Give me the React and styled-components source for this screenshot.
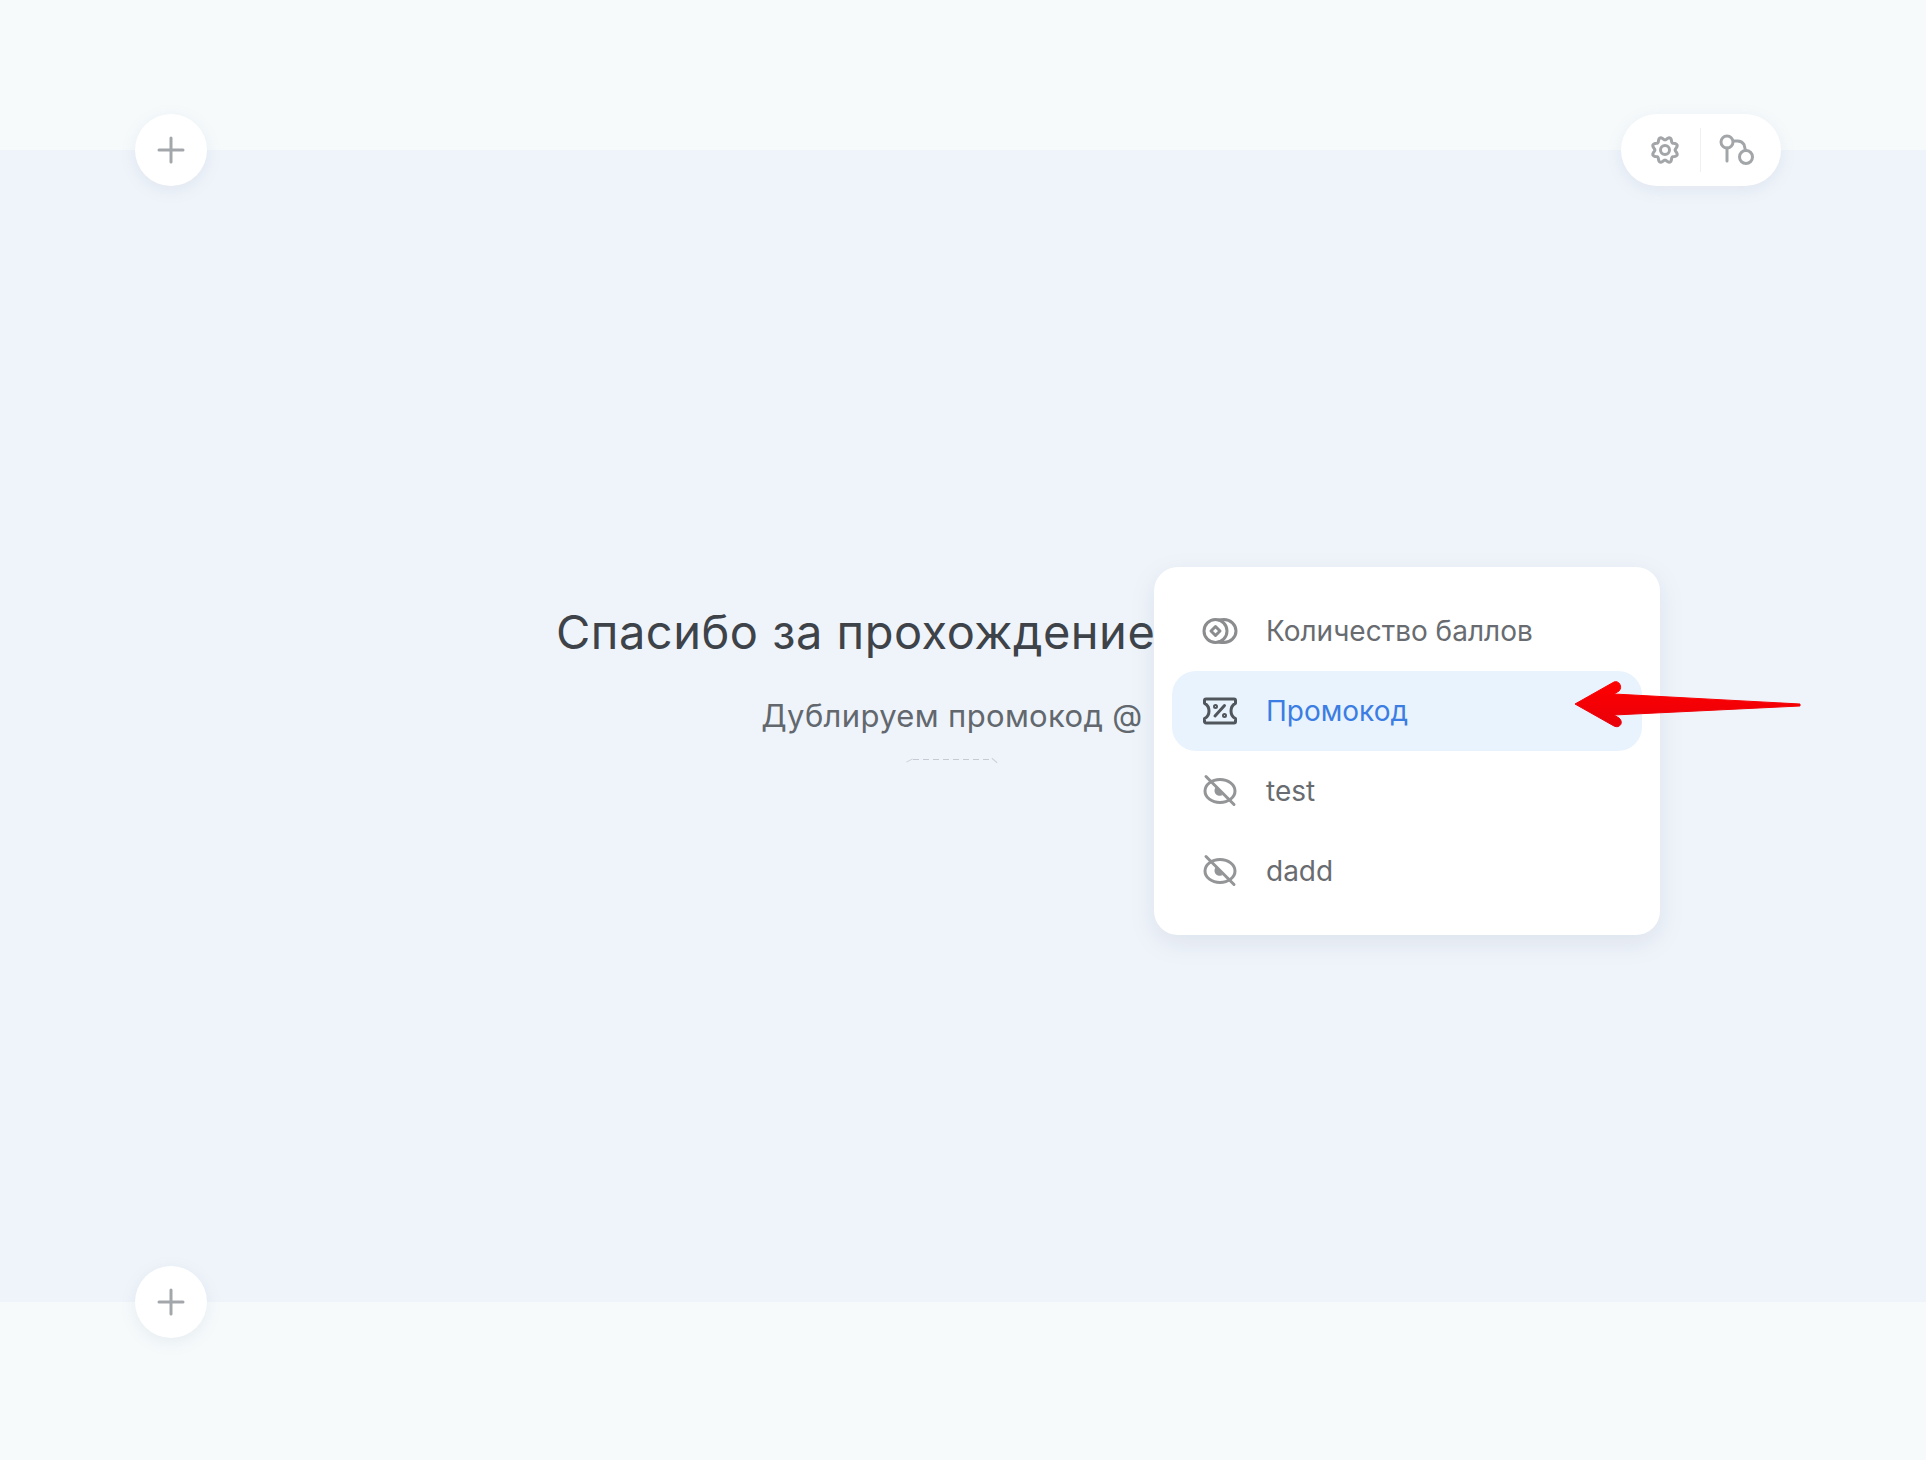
import styled, { createGlobalStyle } from "styled-components";

const GlobalStyle = createGlobalStyle`
  html, body {
    margin: 0;
    padding: 0;
    background: #f6fafb;
    font-family: "Inter", "Noto Sans", sans-serif;
  }
`;

const Page = styled.div`
  width: 1926px;
  height: 1460px;
  display: flex;
  flex-direction: column;
  overflow: hidden;
  position: relative;
`;

const Band = styled.div`
  height: ${(p) => p.$height}px;
  background: #f6fafb;
  flex-shrink: 0;
`;

const Canvas = styled.main`
  position: relative;
  flex: 1;
  background: #eff4fa;
  padding: 457px 0 0 556px;
  box-sizing: border-box;
`;

const Content = styled.section`
  width: 792px;
  display: flex;
  flex-direction: column;
`;

const Title = styled.h1`
  margin: 0;
  font-size: 47px;
  line-height: 50px;
  letter-spacing: 0.5px;
  font-weight: 400;
  color: #3d4349;
  white-space: nowrap;
`;

const Subtitle = styled.p`
  margin: 39px 0 0;
  font-size: 31px;
  line-height: 40px;
  letter-spacing: 0.35px;
  font-weight: 400;
  color: #62686e;
  text-align: center;
  white-space: nowrap;
`;

const DashedEdge = styled.div`
  position: relative;
  width: 78px;
  height: 1px;
  margin: 23px auto 0;
  background: repeating-linear-gradient(90deg, #c5cad3 0 6px, transparent 6px 10px);

  &::before,
  &::after {
    content: "";
    position: absolute;
    top: 1px;
    width: 7px;
    height: 1px;
    background: #cdd2da;
  }

  &::before {
    left: -7px;
    transform: rotate(-28deg);
  }

  &::after {
    right: -7px;
    transform: rotate(40deg);
  }
`;

const RoundButton = styled.button`
  position: absolute;
  left: 135px;
  ${(p) => (p.$bottom ? "bottom: -36px;" : "top: -36px;")}
  width: 72px;
  height: 72px;
  padding: 0;
  border: 0;
  border-radius: 50%;
  background: #fff;
  box-shadow: 0 4px 16px rgba(120, 140, 170, 0.12);
  display: flex;
  align-items: center;
  justify-content: center;
`;

const ToolPill = styled.div`
  position: absolute;
  right: 145px;
  top: -36px;
  width: 160px;
  height: 72px;
  box-sizing: border-box;
  padding-left: 26px;
  border-radius: 36px;
  background: #fff;
  box-shadow: 0 4px 16px rgba(120, 140, 170, 0.12);
  display: flex;
  align-items: center;
  gap: 17px;
`;

const ToolDivider = styled.div`
  width: 1px;
  height: 44px;
  background: #eef0f3;
`;

const Menu = styled.nav`
  position: absolute;
  left: 1154px;
  top: 417px;
  width: 506px;
  height: 368px;
  box-sizing: border-box;
  padding: 24px 18px;
  border-radius: 24px;
  background: #fff;
  box-shadow: 0 8px 24px rgba(110, 130, 165, 0.14);
  display: flex;
  flex-direction: column;
`;

const MenuItem = styled.div`
  height: 80px;
  flex-shrink: 0;
  display: flex;
  align-items: center;
  gap: 28px;
  padding-left: 30px;
  border-radius: 24px;
  font-size: 28px;
  color: ${(p) => (p.$active ? "#3b7de3" : "#686c70")};
  background: ${(p) => (p.$active ? "#e9f3fd" : "transparent")};
`;

const IconBox = styled.svg`
  width: 36px;
  height: 36px;
  flex-shrink: 0;
  fill: none;
  stroke: ${(p) => p.$color || "#939597"};
  stroke-width: 3;
  stroke-linecap: round;
  stroke-linejoin: round;
`;

const ArrowMark = styled.svg`
  position: absolute;
  left: 1570px;
  top: 675px;
  width: 236px;
  height: 56px;
`;

const PlusIcon = () => (
  <svg width="28" height="28" viewBox="0 0 28 28" fill="none" stroke="#a3a7ab" strokeWidth="3" strokeLinecap="round">
    <path d="M14 2v24M2 14h24" />
  </svg>
);

// eight soft lobes, a dent at the top
const gearOutline = Array.from({ length: 96 }, (_, i) => {
  const a = (i / 96) * Math.PI * 2;
  const r = 11.6 - 1.5 * Math.cos(8 * a);
  const x = 18 + r * Math.sin(a);
  const y = 18 - r * Math.cos(a);
  return `${i ? "L" : "M"}${x.toFixed(2)} ${y.toFixed(2)}`;
}).join(" ");

const GearIcon = () => (
  <IconBox viewBox="0 0 36 36" $color="#a3a6a9">
    <path d={`${gearOutline} Z`} />
    <circle cx="18" cy="18" r="4.5" />
  </IconBox>
);

const BranchIcon = () => (
  <IconBox viewBox="0 0 36 36" $color="#a3a6a9">
    <circle cx="9" cy="10" r="6" />
    <circle cx="28" cy="25" r="6.5" />
    <path d="M9 16v13M15.500 9h4c3 0 5 1 6.500 3.500l1.500 6" />
  </IconBox>
);

const CoinsIcon = () => (
  <IconBox viewBox="0 0 36 36" $color="#8a8c8e">
    <circle cx="13.500" cy="18" r="11.500" />
    <path d="M17 7c1.300-.4 2.700-.5 5-.5 6.400 0 12 5.100 12 11.500s-5.600 11.500-12 11.500c-2.300 0-3.700-.1-5-.5" />
    <path d="M13.500 13.500l4.500 4.500-4.500 4.500L9 18z" />
  </IconBox>
);

const TicketIcon = () => (
  <IconBox viewBox="0 0 36 36" $color="#51565c">
    <path d="M2.500 7.500c0-.8.700-1.500 1.500-1.500h28c.8 0 1.500.700 1.500 1.500v2.800c-3.500 1.800-4.500 4.500-4.500 7.700s1 5.900 4.500 7.700v2.800c0 .8-.7 1.500-1.500 1.500H4c-.8 0-1.500-.7-1.500-1.500v-2.800C6 23.900 7 21.200 7 18s-1-5.900-4.500-7.700z" />
    <path d="M22.500 12.500L13 23" />
    <circle cx="13.500" cy="13.500" r="1" />
    <circle cx="22.500" cy="22.500" r="1" />
  </IconBox>
);

const EyeOffIcon = () => (
  <IconBox viewBox="0 0 36 36" $color="#939597">
    <ellipse cx="18" cy="18" rx="15" ry="11.500" />
    <path d="M4 3.500l28 28" />
    <path d="M14.500 13.500c-1.500 1.200-2 2.800-2 4.200 0 3 2.500 5 5.500 5 1 0 1.800-.2 2.500-.5z" fill="#939597" stroke="none" />
  </IconBox>
);

const RedArrow = () => (
  <ArrowMark viewBox="0 0 236 56">
    <defs>
      <linearGradient id="arrowRed" x1="0" y1="0" x2="0" y2="1">
        <stop offset="0" stopColor="#ff0000" />
        <stop offset="1" stopColor="#e8000a" />
      </linearGradient>
    </defs>
    <path
      d="M5 29 L44 7 C49 5 53 12 49 16 L44 19 L230 29 L230 31 L44 40 L49 43 C54 47 50 54 44 51 Z"
      fill="url(#arrowRed)"
      stroke="url(#arrowRed)"
      strokeWidth="1"
      strokeLinejoin="round"
    />
  </ArrowMark>
);

const items = [
  { label: "Количество баллов", Icon: CoinsIcon },
  { label: "Промокод", Icon: TicketIcon, active: true },
  { label: "test", Icon: EyeOffIcon },
  { label: "dadd", Icon: EyeOffIcon },
];

const App = () => {
  return (
    <>
      <GlobalStyle />
      <Page>
        <Band $height={150} />
        <Canvas>
          <RoundButton>
            <PlusIcon />
          </RoundButton>
          <ToolPill>
            <GearIcon />
            <ToolDivider />
            <BranchIcon />
          </ToolPill>
          <Content>
            <Title>Спасибо за прохождение</Title>
            <Subtitle>Дублируем промокод @</Subtitle>
            <DashedEdge />
          </Content>
          <Menu>
            {items.map(({ label, Icon, active }) => (
              <MenuItem key={label} $active={active}>
                <Icon />
                {label}
              </MenuItem>
            ))}
          </Menu>
          <RoundButton $bottom>
            <PlusIcon />
          </RoundButton>
        </Canvas>
        <Band $height={158} />
        <RedArrow />
      </Page>
    </>
  );
};

export default App;
